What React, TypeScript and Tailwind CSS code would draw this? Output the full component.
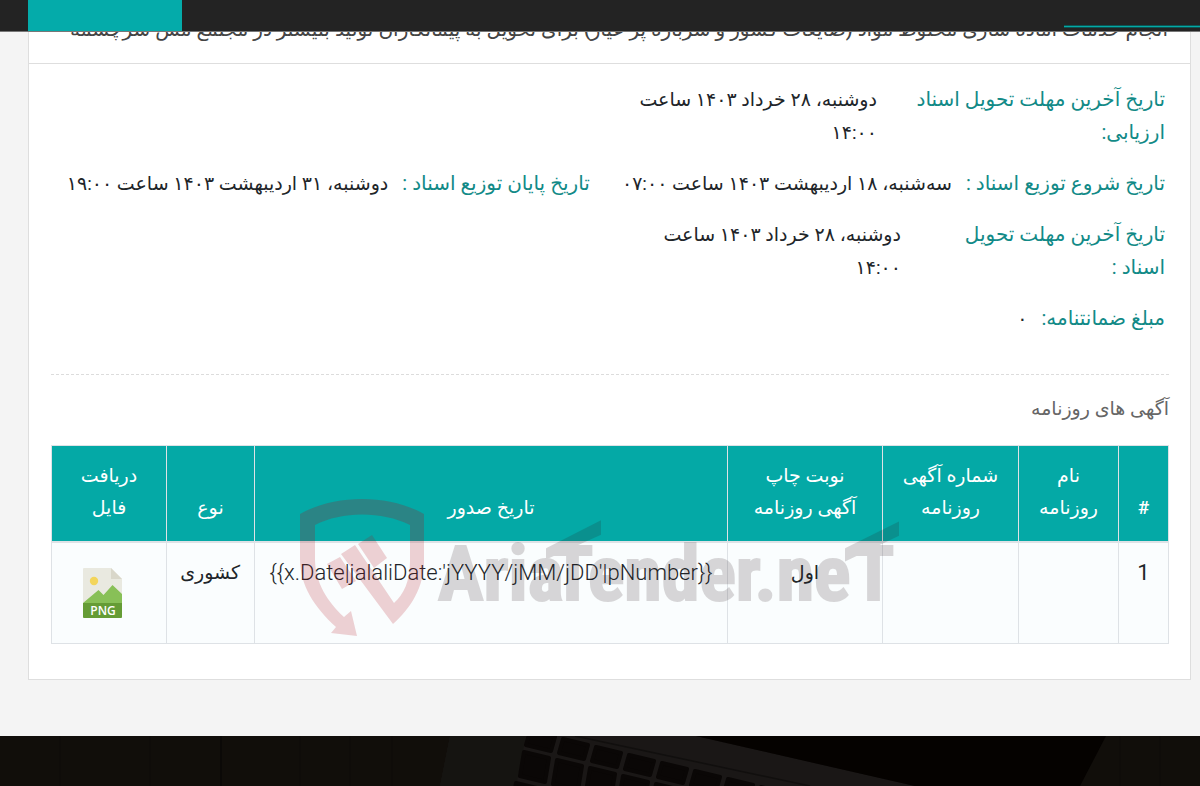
import React from "react";

const faFont = "font-['Roboto','DejaVu_Sans',sans-serif]";

type FieldProps = { label: string; value: string; labelClass?: string; valueClass?: string };

function Field({ label, value, labelClass = "", valueClass = "" }: FieldProps) {
  return (
    <div className="flex gap-[14px]">
      <dt className={`text-[20px] text-[#128a87] ${labelClass}`}>{label}</dt>
      <dd className={valueClass}>{value}</dd>
    </div>
  );
}

function PngFileIcon() {
  return (
    <svg viewBox="0 0 39 50" className="h-[50px] w-[39px]" aria-hidden="true">
      <path d="M1 0h27l11 11v38a1 1 0 0 1-1 1H1a1 1 0 0 1-1-1V1a1 1 0 0 1 1-1z" fill="#e9e9e0" />
      <path d="M28 0l11 11H28z" fill="#d9d7ca" />
      <circle cx="11" cy="13" r="4.200" fill="#f3d55b" />
      <path d="M0 35L15.500 22l5 5L29.500 17 39 26v9z" fill="#88c057" />
      <path d="M0 35h39v14a1 1 0 0 1-1 1H1a1 1 0 0 1-1-1z" fill="#659c35" />
      <text x="20" y="47" textAnchor="middle" direction="ltr" className="fill-white font-['Open_Sans',sans-serif] text-[12px] font-semibold">
        PNG
      </text>
    </svg>
  );
}

function Watermark() {
  return (
    <svg viewBox="0 0 600 138" className="pointer-events-none absolute left-[249px] top-[54px] h-[138px] w-[600px]" aria-hidden="true">
      <g fill="#b0101c" fillOpacity="0.19">
        <path d="M0 42H15V60C15 84 28 103 44 118L51 112 57 137 31 134 36 128C14 108 0 86 0 60z" />
        <path d="M110 42H124V62C124 88 111 109 93 125L41 55 55 46 94 104C104 95 110 82 110 62z" />
        <path d="M58 45L72 36 87 59 74 69z" />
        <path d="M27 65L40 58 56 82 42 90z" />
      </g>
      <path d="M0 42V15C35-5 89-5 124 15V42H110V26C82 12 42 12 15 26V42z" fill="#6b4a4e" fillOpacity="0.38" />
      <g opacity="0.17" fill="#2a1a1e" stroke="#2a1a1e" strokeWidth="2" direction="ltr" className="font-['Liberation_Sans_Narrow','Roboto_Condensed','Liberation_Sans',sans-serif] text-[76px] font-bold">
        <text y="101">
          <tspan x="138">Aria</tspan>
          <tspan x="252">T</tspan>
          <tspan x="288">ender.ne</tspan>
          <tspan x="553">T</tspan>
        </text>
        <path d="M247 50L300 23V35L247 59zM546 50L598 24V36L546 61z" />
      </g>
    </svg>
  );
}

const keyRows = [
  { x: 530, y: -5, h: 14, count: 9 },
  { x: 524, y: 16, h: 24, count: 9 },
  { x: 516, y: 47, h: 24, count: 2 },
];

function FooterArt() {
  return (
    <svg viewBox="0 0 1200 50" preserveAspectRatio="none" className="h-[50px] w-full" aria-hidden="true">
      <rect width="1200" height="50" fill="#110e0a" />
      <path d="M60 0v50M150 0v50M300 0v50M350 0v50M392 0v50M1120 0v50M1160 0v50" stroke="#0e0b08" />
      <path d="M221 0v50" stroke="#070504" />
      <path d="M450 0H696L915 50H440z" fill="#1a1716" />
      <path d="M450 0h76l-10 50h-76z" fill="#151411" />
      <path d="M696 0h410l-26 50H915z" fill="#050200" />
      <path d="M575 0L810 50" stroke="#110f0e" strokeWidth="1.500" fill="none" />
      {keyRows.map((row) =>
        Array.from({ length: row.count }, (_, i) => (
          <path
            key={`${row.x}-${i}`}
            d={`M${row.x + i * 33} ${row.y + i * 8}l25 6l-4 ${row.h}l-25 -6z`}
            fill="#0a0706"
            stroke="#0a0706"
            strokeWidth="4"
            strokeLinejoin="round"
          />
        ))
      )}
    </svg>
  );
}

const headCell = "border border-[#dee2e6] border-b-2 px-[17px] pt-[14px] pb-[17px] align-bottom font-medium";
const bodyCell = "border border-[#dee2e6] px-[14px] pt-[13px] align-top";

export default function App() {
  return (
    <div dir="rtl" lang="fa" className={`min-h-screen bg-[#f4f4f4] text-[19px] leading-[33px] text-[#212529] ${faFont}`}>
      <header className="relative z-10 flex h-8 items-start justify-between border-b border-[#777] bg-[#232323] pl-7">
        <div className="mt-[25px] h-[3px] w-[136px] border-y border-[#0c5553] bg-[#04a8a6]" />
        <div className="h-[31px] w-[154px] bg-[#04abaa]" />
      </header>

      <main className="-mt-8 pb-14 pl-7 pr-[9px]">
        <section className="border border-[#dedede] bg-white">
          <h1 className="whitespace-nowrap border-b border-[#dedede] px-[22px] pb-[17px] pt-[12px] text-[20px] font-medium text-[#444]">
            انجام خدمات آماده سازی مخلوط مواد (ضایعات کشور و سرباره پر عیار) برای تحویل به پیمانکاران تولید بلیستر در مجتمع مس سرچشمه
          </h1>

          <div className="pb-[35px] pl-[22px] pr-[21px]">
            <dl className="flex flex-col gap-[18px] border-b border-dashed border-[#dcdcdc] px-1 pb-[39px] pt-[19px]">
              <Field label="تاریخ آخرین مهلت تحویل اسناد ارزیابی:" value="دوشنبه، ۲۸ خرداد ۱۴۰۳ ساعت ۱۴:۰۰" labelClass="w-[274px]" valueClass="w-[260px]" />
              <div className="flex gap-[32px]">
                <Field label="تاریخ شروع توزیع اسناد :" value="سه‌شنبه، ۱۸ اردیبهشت ۱۴۰۳ ساعت ۰۷:۰۰" labelClass="whitespace-nowrap" valueClass="whitespace-nowrap" />
                <Field label="تاریخ پایان توزیع اسناد :" value="دوشنبه، ۳۱ اردیبهشت ۱۴۰۳ ساعت ۱۹:۰۰" labelClass="whitespace-nowrap" valueClass="whitespace-nowrap" />
              </div>
              <Field label={"تاریخ آخرین مهلت تحویل اسناد\u00a0:"} value="دوشنبه، ۲۸ خرداد ۱۴۰۳ ساعت ۱۴:۰۰" labelClass="w-[250px]" valueClass="w-[260px]" />
              <Field label="مبلغ ضمانتنامه:" value="۰" />
            </dl>

            <h2 className="pb-5 pt-[17px] text-[#666]">آگهی های روزنامه</h2>

            <div className="relative">
              <table className="w-full table-fixed border-collapse text-center">
                <colgroup>
                  <col className="w-[50px]" />
                  <col className="w-[100px]" />
                  <col className="w-[136px]" />
                  <col className="w-[155px]" />
                  <col />
                  <col className="w-[88px]" />
                  <col className="w-[115px]" />
                </colgroup>
                <thead className="bg-[#04a9a6] leading-8 text-white">
                  <tr>
                    <th className={headCell}>#</th>
                    <th className={headCell}>نام روزنامه</th>
                    <th className={headCell}>شماره آگهی روزنامه</th>
                    <th className={headCell}>نوبت چاپ آگهی روزنامه</th>
                    <th className={headCell}>تاریخ صدور</th>
                    <th className={headCell}>نوع</th>
                    <th className={headCell}>دریافت فایل</th>
                  </tr>
                </thead>
                <tbody className="bg-[#fafdfe]">
                  <tr className="h-[101px]">
                    <td className={`${bodyCell} text-[22px]`}>1</td>
                    <td className={bodyCell} />
                    <td className={bodyCell} />
                    <td className={bodyCell}>اول</td>
                    <td className={`${bodyCell} whitespace-nowrap text-[22px] font-light`}>{"{{x.Date|jalaliDate:'jYYYY/jMM/jDD'|pNumber}}"}</td>
                    <td className={bodyCell}>کشوری</td>
                    <td className="border border-[#dee2e6] pr-[14px]">
                      <a href="#png" aria-label="PNG" className="inline-block align-middle">
                        <PngFileIcon />
                      </a>
                    </td>
                  </tr>
                </tbody>
              </table>
              <Watermark />
            </div>
          </div>
        </section>
      </main>

      <footer className="flex bg-[#110e0a]">
        <FooterArt />
      </footer>
    </div>
  );
}
